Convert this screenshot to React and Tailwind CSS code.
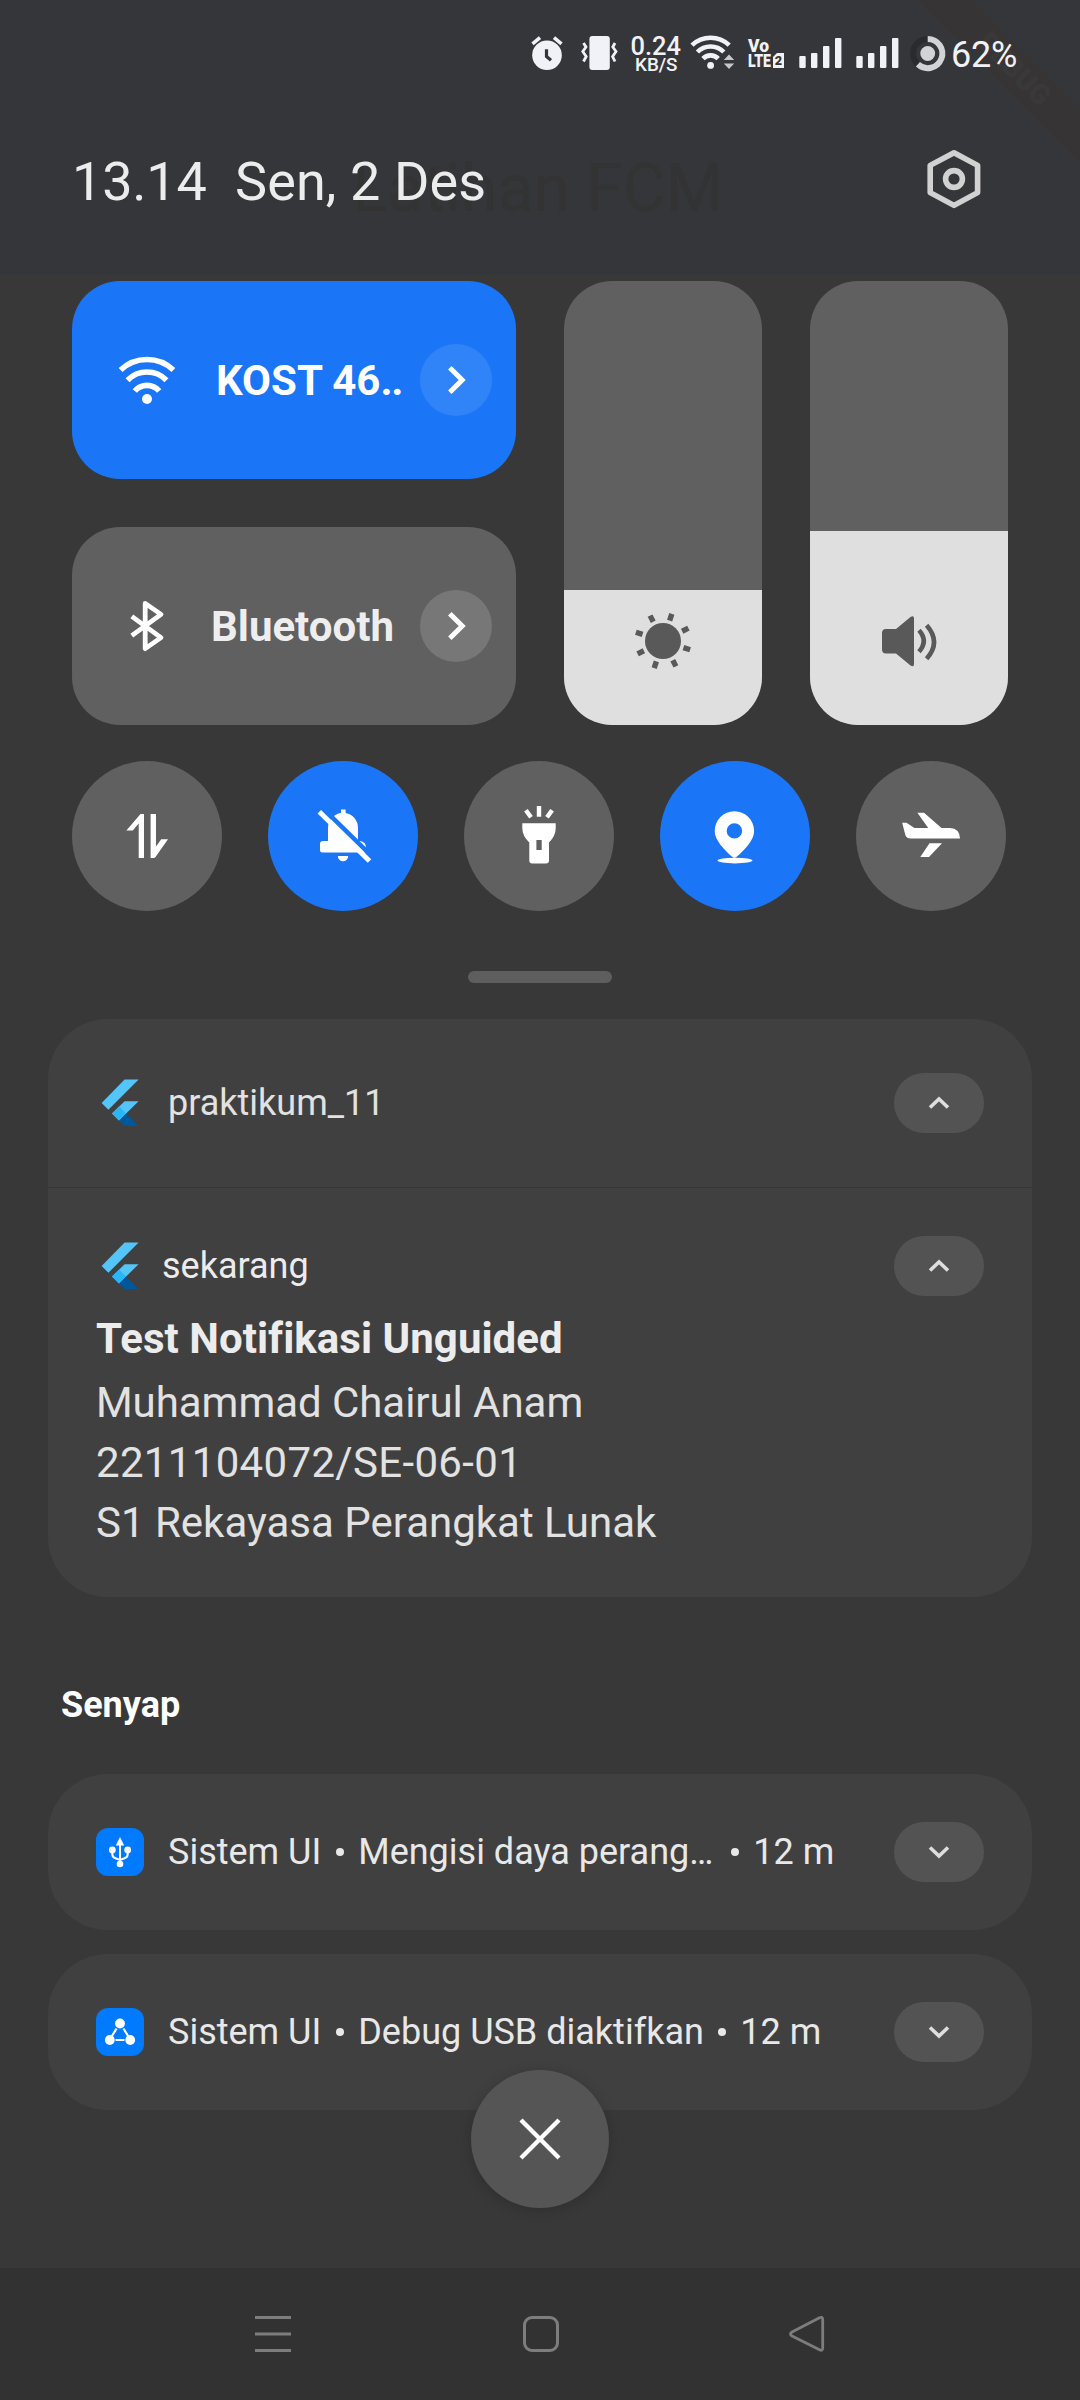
import React from "react";

function Icon({ box, className = "", children }) {
  const [, , w, h] = box.split(" ");
  return (
    <svg width={w} height={h} viewBox={box} className={"shrink-0 " + className} fill="none">
      {children}
    </svg>
  );
}

function SignalBars({ x }) {
  return (
    <Icon box={`${x} 30 44 48`}>
      <g fill="#f1f2f7">
        <rect x={x + 0.3} y="56" width="6.4" height="12" rx="1" />
        <rect x={x + 12} y="53" width="6.4" height="15" rx="1" />
        <rect x={x + 24} y="46" width="6.4" height="22" rx="1" />
        <rect x={x + 36} y="38" width="6.4" height="30" rx="1" />
      </g>
    </Icon>
  );
}

function StatusBar() {
  return (
    <div className="relative flex h-[78px] items-end pl-[530px]">
      <Icon box="530 30 34 48">
        <circle cx="547" cy="55.2" r="14.8" fill="#f1f2f7" />
        <path d="M532.5 43.8 540 37.6M554 37.6 561.5 43.8" stroke="#f1f2f7" strokeWidth="3.6" />
        <path d="M546.5 49.3V56.5L551 60.3" stroke="#35363a" strokeWidth="3.2" />
      </Icon>
      <Icon box="580 30 38 48" className="ml-4">
        <rect x="589.4" y="36" width="20.4" height="34" rx="3" fill="#f1f2f7" />
        <path d="M583.5 43 586 47 582.8 51.5 586.2 56.5 583.5 61.5M615 43 612.8 47 616 51.5 612.6 56.5 615 61.5" stroke="#f1f2f7" strokeWidth="2.8" />
      </Icon>
      <Icon box="630 30 52 48" className="ml-3">
        <g fill="#f1f2f7" fontFamily="Roboto" fontWeight="500">
          <text x="630.5" y="54.6" fontSize="25.5" textLength="50.5" lengthAdjust="spacingAndGlyphs">0.24</text>
          <text x="635" y="71" fontSize="19" textLength="42.5" lengthAdjust="spacingAndGlyphs">KB/S</text>
        </g>
      </Icon>
      <Icon box="690 30 46 48" className="ml-2">
        <g stroke="#f1f2f7" strokeWidth="4.6">
          <path d="M692 45.2A27 27 0 0 1 729.2 45.2" />
          <path d="M697.4 52A18.5 18.5 0 0 1 723.8 52" />
          <path d="M703 58.6A10.5 10.5 0 0 1 718.2 58.6" />
        </g>
        <circle cx="710.6" cy="65.4" r="3.4" fill="#f1f2f7" />
        <path d="M729 54.5 734.2 60H723.8ZM729 69 734.2 63.5H723.8Z" fill="#c5c8ca" />
      </Icon>
      <Icon box="747 30 38 48" className="ml-[11px]">
        <g fill="#f1f2f7" fontFamily="Roboto" fontWeight="900">
          <text x="748" y="52" fontSize="18" textLength="21" lengthAdjust="spacingAndGlyphs">Vo</text>
          <text x="748" y="67.4" fontSize="18" textLength="23" lengthAdjust="spacingAndGlyphs">LTE</text>
          <path d="M777 53H784V68H773V57Z" />
          <text x="774.8" y="65.4" fontSize="13" fill="#35363a" textLength="7.4" lengthAdjust="spacingAndGlyphs">2</text>
        </g>
      </Icon>
      <span className="ml-[14px]" />
      <SignalBars x={799} />
      <span className="ml-[13px]" />
      <SignalBars x={856} />
      <Icon box="908 30 40 48" className="ml-2">
        <circle cx="927.7" cy="53.5" r="14.6" stroke="#2a2b2e" strokeWidth="6" />
        <path d="M927.7 38.9A14.6 14.6 0 1 1 917.9 64.3" stroke="#d1d3d7" strokeWidth="6" />
        <circle cx="927.7" cy="53.5" r="7.4" fill="#d1d3d7" />
      </Icon>
      <span className="ml-[3px] mb-px text-[36px] leading-[44px] text-[#f1f2f7] tracking-[-0.2px]">62%</span>
    </div>
  );
}

function Header() {
  return (
    <header className="relative h-[275px] overflow-hidden bg-[#35363a]">
      <div className="absolute left-[352px] top-[151px] whitespace-nowrap text-[66px] leading-[76px] text-[#333333]">
        Latihan FCM
      </div>
      <div className="absolute left-[807px] top-[54px] flex h-[36px] w-[420px] rotate-45 items-center justify-center bg-[#373435] pr-2 text-[28px] font-black text-[#3a393a]">
        DEBUG
      </div>
      <StatusBar />
      <div className="relative flex items-center justify-between pl-[72px] pr-[98px] pt-[66px]">
        <div className="flex h-[70px] items-center whitespace-pre pt-1.5 text-[54px] leading-[70px] text-[#ececec]">
          <span className="w-[163px] tracking-[-0.2px]">13.14</span>
          <span className="tracking-[0.1px]">Sen, 2 Des</span>
        </div>
        <Icon box="926 147 56 64">
          <path d="M954 152.8 977.6 165.4V192.6L954 205.4 930.2 192.6V165.4Z" stroke="#d0d1d0" strokeWidth="5.6" strokeLinejoin="round" />
          <circle cx="954" cy="179" r="8.4" stroke="#d0d1d0" strokeWidth="5.6" />
        </Icon>
      </div>
    </header>
  );
}

function WideTile({ icon, label, className, labelClass, arrowClass }) {
  return (
    <div className={"flex h-[198px] items-center rounded-[48px] pl-9 pr-6 " + className}>
      <div className="flex w-[78px] justify-center">{icon}</div>
      <div className={"flex-1 whitespace-nowrap pt-0.5 text-[42px] font-bold leading-[60px] " + labelClass}>{label}</div>
      <div className={"flex size-[72px] items-center justify-center rounded-full " + arrowClass}>
        <Icon box="444 362 24 36">
          <path d="M449.8 367.8 462.2 380 449.8 392.2" stroke="#fff" strokeWidth="5" />
        </Icon>
      </div>
    </div>
  );
}

function Slider({ fill, children }) {
  return (
    <div className="flex w-[198px] flex-col justify-end overflow-hidden rounded-[48px] bg-[#606060]">
      <div className="flex items-end justify-center bg-[#dfdfdf] pb-[49px]" style={{ height: fill }}>
        {children}
      </div>
    </div>
  );
}

function Toggle({ on, children }) {
  return (
    <div className={"flex size-[150px] items-center justify-center rounded-full " + (on ? "bg-[#1a76f7]" : "bg-[#606060]")}>
      {children}
    </div>
  );
}

const sunRays = [18, 63, 108, 153, 198, 243, 288, 333];

function QuickSettings() {
  return (
    <section className="flex flex-col items-center pt-1.5">
      <div className="flex h-[444px] w-[936px] gap-12">
        <div className="flex w-[444px] flex-col gap-12">
          <WideTile
            className="bg-[#1a76f7]"
            labelClass="pl-[30px] text-white"
            arrowClass="bg-[#3184f8]"
            label={
              <>
                KOST 46<span className="tracking-[-1.5px]">..</span>
              </>
            }
            icon={
              <Icon box="117 350 60 60">
                <g stroke="#fff" strokeWidth="5.6">
                  <path d="M120.6 370A38.5 38.5 0 0 1 173.4 370" />
                  <path d="M127.5 380.3A27 27 0 0 1 166.5 380.3" />
                  <path d="M134.8 391A16 16 0 0 1 159.2 391" />
                </g>
                <circle cx="147" cy="399" r="5" fill="#fff" />
              </Icon>
            }
          />
          <WideTile
            className="bg-[#606060]"
            labelClass="pl-[25px] text-[#eeeeee]"
            arrowClass="bg-[#777777]"
            label="Bluetooth"
            icon={
              <Icon box="117 596 60 60">
                <path d="M131.8 616.4 161 637.6 145.2 648.6V603.4L161 614.4 131.8 635.6" stroke="#fff" strokeWidth="4.8" strokeLinejoin="round" />
              </Icon>
            }
          />
        </div>
        <Slider fill="135px">
          <Icon box="633 606 60 70">
            <circle cx="663" cy="641" r="18" fill="#595959" />
            {sunRays.map((a) => (
              <rect key={a} x="660.3" y="612.5" width="5.4" height="7" fill="#595959" transform={`rotate(${a} 663 641)`} />
            ))}
          </Icon>
        </Slider>
        <Slider fill="194px">
          <Icon box="879 606 60 70">
            <path d="M886 629H896L910.5 617Q914 615 914 618.5V664Q914 667.5 910.5 665.5L896 653.5H886Q882 653.5 882 649.5V633Q882 629 886 629Z" fill="#595959" />
            <path d="M919 630.3Q928.5 641 919 651.8M926.6 625.2Q941.5 642 926.6 658.8" stroke="#595959" strokeWidth="4.6" />
          </Icon>
        </Slider>
      </div>

      <div className="mt-9 mr-0.5 flex gap-[46px]">
        <Toggle>
          <Icon box="117 806 60 60">
            <path d="M140.5 814H144V858H138.7V823.5L132.8 830.5H126.4ZM150.6 814H156V846.5L161.2 839.2H168L155.5 857Q154.8 858 153.5 858H150.6Z" fill="#fff" />
          </Icon>
        </Toggle>
        <Toggle on>
          <Icon box="313 806 60 60">
            <path d="M341 812.9V809.5H345.6V812.9A15 15 0 0 1 358 828V841H360Q366 841.5 366 848V852.5H322.5Q320 852.5 320 850V844Q320 841 323 841H328V828A15 15 0 0 1 341 812.9Z" fill="#fff" />
            <path d="M337.8 856H348.2A5.2 5.2 0 0 1 337.8 856Z" fill="#fff" />
            <path d="M322.2 807.7 372.5 857" stroke="#1a76f7" strokeWidth="4.5" />
            <path d="M319.3 811.8 369.5 861" stroke="#fff" strokeWidth="5" />
          </Icon>
        </Toggle>
        <Toggle>
          <Icon box="509 806 60 60">
            <path fillRule="evenodd" d="M522.3 823.3H555.7V828Q555.7 836 549 842.5V860.5Q549 863.5 546 863.5H532.3Q529.3 863.5 529.3 860.5V842.5Q522.3 836 522.3 828ZM536.4 840V850H541.7V840Z" fill="#fff" />
            <path d="M539 806V816.7M525.9 810.3 531 817.3M552.1 810.3 547 817.3" stroke="#fff" strokeWidth="4.4" />
          </Icon>
        </Toggle>
        <Toggle on>
          <Icon box="705 806 60 60">
            <path fillRule="evenodd" d="M734.4 811.2A19.7 19.7 0 0 1 754.1 831C754.1 840 745 850 736 857.2Q734.4 858.5 732.8 857.2C724 850 714.7 840 714.7 831A19.7 19.7 0 0 1 734.4 811.2ZM734.4 823.2A7.7 7.7 0 1 0 734.4 838.6A7.7 7.7 0 1 0 734.4 823.2Z" fill="#fff" />
            <ellipse cx="735" cy="860.6" rx="17.5" ry="2.8" fill="#fff" />
          </Icon>
        </Toggle>
        <Toggle>
          <Icon box="901 806 60 60">
            <path d="M902.2 822.7H906.5L914.5 828H928.2L917.4 812.7H924L941.5 828H950Q959.8 828.5 960 838.5H911Q906.5 838.5 905.3 835ZM929.5 843.3H942L929 857H920.3Z" fill="#fff" />
          </Icon>
        </Toggle>
      </div>
      <div className="mt-[60px] h-3 w-36 rounded-full bg-[#5e5e5e]" />
    </section>
  );
}

function FlutterLogo() {
  return (
    <svg width="48" height="48" viewBox="0 0 24 24" className="shrink-0">
      <path d="M14.3 0.3H21.3L6.2 15.4 2.8 12Z" fill="#54c5f8" />
      <path d="M14.3 11.1H21.3L11.5 20.8 8 17.3Z" fill="#54c5f8" />
      <path d="M11.5 20.8 15 17.3 21.3 23.5H14.3Z" fill="#01579b" />
      <path d="M8 17.3 11.5 13.8 15 17.3 11.5 20.8Z" fill="#29b6f6" />
    </svg>
  );
}

function ExpandPill({ up }) {
  return (
    <div className="flex h-[60px] w-[90px] shrink-0 items-center justify-center rounded-full bg-[#535353]">
      <svg width="24" height="16" viewBox="0 0 24 16" fill="none">
        <path d={up ? "M3 12.5 12 4 21 12.5" : "M3 3.5 12 12 21 3.5"} stroke="#dedede" strokeWidth="3.6" />
      </svg>
    </div>
  );
}

function FlutterNotification() {
  return (
    <section className="mx-12 mt-9 h-[578px] rounded-[60px] bg-[#404040]">
      <div className="flex h-[168px] items-center pl-12 pr-12">
        <FlutterLogo />
        <span className="ml-6 flex-1 text-[36px] leading-[48px] text-[#e2e2e2]">praktikum_11</span>
        <ExpandPill up />
      </div>
      <div className="border-t border-[#383838] px-12 pt-12">
        <div className="flex items-center">
          <FlutterLogo />
          <span className="ml-[18px] flex-1 text-[36px] leading-[48px] text-[#ececec]">sekarang</span>
          <ExpandPill up />
        </div>
        <div className="mt-[13px] text-[42px] font-bold leading-[60px] tracking-[0.04px] text-[#ececec]">Test Notifikasi Unguided</div>
        <div className="mt-1 text-[42px] leading-[60px] text-[#e2e2e2]">
          <div className="tracking-[-0.05px]">Muhammad Chairul Anam</div>
          <div className="tracking-[0.33px]">2211104072/SE-06-01</div>
          <div>S1 Rekayasa Perangkat Lunak</div>
        </div>
      </div>
    </section>
  );
}

function SilentNotification({ icon, title, time, gap }) {
  return (
    <div className="flex h-[156px] items-center rounded-[60px] bg-[#404040] px-12">
      <div className="size-12 shrink-0 overflow-hidden rounded-[12px] bg-[#007bff]">{icon}</div>
      <div className="ml-6 flex flex-1 items-center whitespace-nowrap text-[36px] leading-[48px] text-[#e8e8e8]">
        <span>Sistem UI</span>
        <span className="mx-[14.5px] size-2 rounded-full bg-[#e8e8e8]" />
        <span>{title}</span>
        <span className={"mr-[14px] size-2 rounded-full bg-[#e8e8e8] " + gap} />
        <span>{time}</span>
      </div>
      <ExpandPill />
    </div>
  );
}

function SilentSection() {
  return (
    <section className="mx-12 mt-[81px]">
      <h2 className="h-[96px] pl-[13px] text-[36px] font-bold leading-[54px] text-white">Senyap</h2>
      <div className="flex flex-col gap-6">
        <SilentNotification
          title="Mengisi daya perang…"
          time="12 m"
          gap="ml-[18px]"
          icon={
            <Icon box="96 1828 48 48">
              <path d="M120 1837 124.2 1845.5H115.8Z" fill="#fff" />
              <path d="M120 1844V1864M112.3 1850V1854Q112.3 1857.5 115.5 1858.2L120 1860L124.5 1858.2Q127.7 1857.5 127.7 1854V1850" stroke="#fff" strokeWidth="2" />
              <g fill="#fff">
                <circle cx="112.3" cy="1850" r="3.4" />
                <circle cx="127.7" cy="1850" r="3.4" />
                <circle cx="120" cy="1864" r="3.3" />
              </g>
            </Icon>
          }
        />
        <SilentNotification
          title="Debug USB diaktifkan"
          time="12 m"
          gap="ml-[14.5px]"
          icon={
            <Icon box="96 2008 48 48">
              <g fill="#fff">
                <circle cx="120" cy="2023.5" r="4.9" />
                <circle cx="109.8" cy="2040" r="4.9" />
                <circle cx="130.2" cy="2040" r="4.9" />
              </g>
              <path d="M116.6 2028.5 111.6 2036.5M123.4 2028.5 128.4 2036.5M115.5 2040H124.5" stroke="#fff" strokeWidth="2.2" />
            </Icon>
          }
        />
      </div>
    </section>
  );
}

function NavBar() {
  return (
    <nav className="flex h-[132px] items-start bg-[#323232] pl-[253px] pt-[46px]">
      <Icon box="253 2314 40 40">
        <path d="M255 2317.5H291M255 2334H291M255 2350.5H291" stroke="#7d7d7d" strokeWidth="3" />
      </Icon>
      <Icon box="521 2314 40 40" className="ml-[228px]">
        <rect x="524.5" y="2317.5" width="33" height="33" rx="7.5" stroke="#7d7d7d" strokeWidth="3" />
      </Icon>
      <Icon box="787 2314 40 40" className="ml-[226px]">
        <path d="M819.5 2317.8Q822.7 2316.2 822.7 2319.8V2347.8Q822.7 2351.4 819.5 2349.8L792 2336Q789 2334 792 2332Z" stroke="#7d7d7d" strokeWidth="2.8" strokeLinejoin="round" />
      </Icon>
    </nav>
  );
}

export default function App() {
  return (
    <div className="relative flex h-[2400px] w-[1080px] flex-col bg-[#383838] font-['Roboto',sans-serif]">
      <Header />
      <QuickSettings />
      <FlutterNotification />
      <SilentSection />
      <div className="absolute left-[471px] top-[2070px] flex size-[138px] items-center justify-center rounded-full bg-[#555555] shadow-[0_2px_14px_rgba(0,0,0,0.18)]">
        <svg width="48" height="48" viewBox="0 0 48 48" fill="none">
          <path d="M5 5 43 43M43 5 5 43" stroke="#fff" strokeWidth="4.4" />
        </svg>
      </div>
      <div className="flex-1" />
      <NavBar />
    </div>
  );
}
